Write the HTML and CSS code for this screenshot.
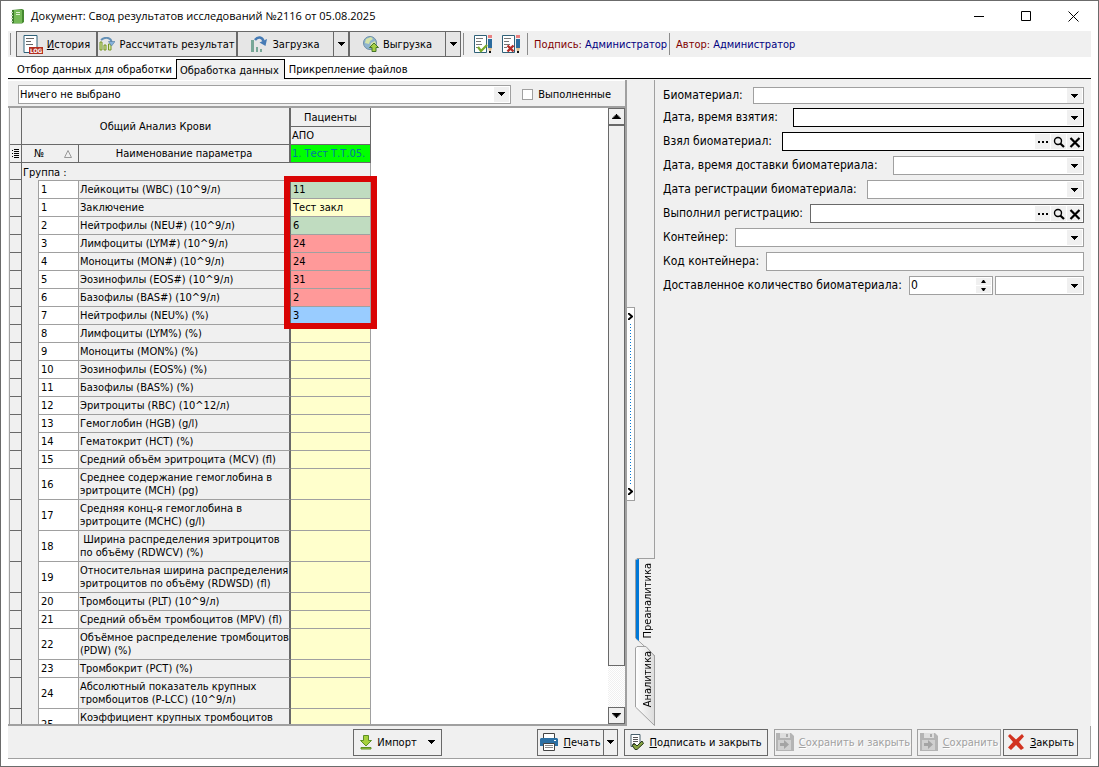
FILE: index.html
```html
<!DOCTYPE html>
<html lang="ru">
<head>
  <meta charset="UTF-8" />
  <title>Документ: Свод результатов исследований</title>
  <link rel="stylesheet" href="styles.css">
</head>
<body>
  <!-- Shared shapes -->
  <svg class="defs" aria-hidden="true">
    <symbol id="arrow" viewBox="0 0 7 4"><path d="M0 0h7v1H6v1H5v1H4v1H3V3H2V2H1V1H0z" /></symbol>
    <symbol id="arrow-up" viewBox="0 0 7 4"><path d="M3 0h1v1h1v1h1v1h1v1H0V3h1V2h1V1h1z" /></symbol>
    <symbol id="dots" viewBox="0 0 12 12"><path d="M1 5h2v2H1zM5 5h2v2H5zM9 5h2v2H9z" /></symbol>
    <symbol id="lens" viewBox="0 0 12 12">
      <circle cx="5" cy="5" r="3.5" fill="none" stroke="#000" stroke-width="1.4" />
      <path d="M7.3 7.5L11 11" stroke="#000" stroke-width="2.2" />
    </symbol>
    <symbol id="cross" viewBox="0 0 12 12"><path d="M1.5 2l9 9M10.5 2l-9 9" stroke="#000" stroke-width="2.2" /></symbol>
    <symbol id="doc-pencil" viewBox="0 0 20 20">
      <path d="M1.5 1.5h12v17h-12z" fill="#fff" stroke="#2f6178" />
      <path d="M3 4.5h7M3 7.5h5M3 10.5h6M3 13.5h3" stroke="#777" />
      <path d="M15 1h4v3h-4z" fill="#e98080" />
      <path d="M15 5h4v9h-4z" fill="#2c6c9e" />
      <path d="M15 14h4l-1 3h-2z" fill="#dfc090" />
      <path d="M16 17h2v2h-2z" fill="#111" />
    </symbol>
    <symbol id="floppy" viewBox="0 0 18 18">
      <path d="M0 0h15l3 3v15H0z" fill="#b4b4b4" />
      <path d="M4 0h10v5H4z" fill="#dedede" />
      <path d="M10 1h2v3h-2z" fill="#aaa" />
      <path d="M2 7h13v10H2z" fill="#d0d0d0" />
      <path d="M4 10h4V7l5 4.500-5 4.500v-3H4z" fill="#a4a4a4" />
    </symbol>
  </svg>

  <div class="window">
    <header class="titlebar">
      <svg class="title-icon" viewBox="0 0 14 16">
        <path d="M1 2l10-1 2 1v12l-2 1.500H1z" fill="#45892f" />
        <path d="M1 2h10v13H1z" fill="#74b956" />
        <path d="M1 2h2v13H1z" fill="#3c7c2b" />
        <path d="M5 4.500h4M5 6.500h4" stroke="#dff2d3" />
        <path d="M0 4.500h2M0 7.500h2M0 10.500h2M0 13.500h2" stroke="#c4d8bb" />
      </svg>
      <h1>Документ: Свод результатов исследований №2116 от 05.08.2025</h1>
      <div class="window-controls">
        <button type="button" aria-label="Свернуть"><svg viewBox="0 0 11 11"><path d="M0 5.500h10" stroke="#000" /></svg></button>
        <button type="button" aria-label="Развернуть"><svg viewBox="0 0 11 11"><path d="M.5.500h9v9h-9z" fill="none" stroke="#000" /></svg></button>
        <button type="button" aria-label="Закрыть окно"><svg viewBox="0 0 11 11"><path d="M.5.500l10 10M10.500.500l-10 10" stroke="#000" /></svg></button>
      </div>
    </header>

    <div class="toolbar">
      <span class="sep grip"></span>
      <button type="button" class="tool history">
        <svg width="20" height="19" viewBox="0 0 20 19">
          <path d="M1 .500h13v17H1z" fill="#fff" stroke="#2f6178" />
          <path d="M3 3.500h8M3 6.500h5M3 9.500h7" stroke="#666" />
          <path d="M6 12h14v7H6z" fill="#b33022" />
          <text x="7" y="18" font-size="6" font-weight="bold" fill="#fff">LOG</text>
        </svg>
        <span><u>И</u>стория</span>
      </button>
      <button type="button" class="tool calc">
        <svg width="16" height="14" viewBox="0 0 16 14">
          <path d="M1 5h2v8H1zM5 8h2v5H5zM9.500 7H12v6H9.500z" fill="#d9ecab" stroke="#769422" />
          <path d="M2 3C7-1 12 1 12.500 5" fill="none" stroke="#6490b6" stroke-width="2" />
          <path d="M9.500 4.500H16L12.500 9z" fill="#86b3dc" stroke="#50789c" stroke-width=".6" />
        </svg>
        <span>Рассчитать результат</span>
      </button>
      <div class="split">
        <button type="button" class="tool">
          <svg width="17" height="16" viewBox="0 0 17 16">
            <path d="M0 4h3v12H0zM5 11h2v5H5zM9 13h2v3H9z" fill="#78a797" />
            <path d="M4 4C7 0 11 1 12.500 5" fill="none" stroke="#467bb5" stroke-width="2.500" />
            <path d="M8.500 6.500L16 3l-1.500 7z" fill="#467bb5" />
          </svg>
          <span>Загрузка</span>
        </button>
        <button type="button" class="drop" aria-label="Меню загрузки"><svg class="arrow"><use href="#arrow" /></svg></button>
      </div>
      <div class="split">
        <button type="button" class="tool">
          <svg width="16" height="16" viewBox="0 0 16 16">
            <circle cx="7" cy="7" r="6.500" fill="#8fb4ce" stroke="#6c8ea6" />
            <path d="M3 3l5-2 2 2-3 2-1 3-4-1zM8 7l4-2 1 3-3 4-3-1z" fill="#d5e4a8" />
            <path d="M11 7l4.500 4.500H13V15.500H9V11.500H6.500z" fill="#a7cf45" stroke="#45752a" />
          </svg>
          <span>Выгрузка</span>
        </button>
        <button type="button" class="drop" aria-label="Меню выгрузки"><svg class="arrow"><use href="#arrow" /></svg></button>
      </div>
      <span class="sep"></span>
      <button type="button" class="flat" aria-label="Подписать">
        <svg width="20" height="20" viewBox="0 0 20 20"><use href="#doc-pencil" /><path d="M5 13l3 4 6-6" fill="none" stroke="#79a928" stroke-width="2.200" /></svg>
      </button>
      <button type="button" class="flat" aria-label="Снять подпись">
        <svg width="20" height="20" viewBox="0 0 20 20"><use href="#doc-pencil" /><path d="M6.500 11.500l6 6M12.500 11.500l-6 6" stroke="#b32c27" stroke-width="2.400" /></svg>
      </button>
      <span class="sep"></span>
      <p class="person">Подпись: <b>Администратор</b></p>
      <span class="sep"></span>
      <p class="person">Автор: <b>Администратор</b></p>
    </div>

    <nav class="tabs">
      <button type="button">Отбор данных для обработки</button>
      <button type="button" class="active">Обработка данных</button>
      <button type="button">Прикрепление файлов</button>
    </nav>

    <main class="content">
      <section class="left">
        <div class="filter">
          <div class="combo">
            <select aria-label="Фильтр"><option>Ничего не выбрано</option></select>
            <span class="combo-btn"><svg class="arrow"><use href="#arrow" /></svg></span>
          </div>
          <label class="check"><input type="checkbox" /> Выполненные</label>
        </div>
        <div class="grid">
          <div class="grid-view">
            <table>
              <colgroup><col class="c-mark"><col class="c-indent"><col class="c-num"><col class="c-name"><col class="c-value"></colgroup>
              <thead>
                <tr>
                  <th class="mark" rowspan="2"></th>
                  <th class="thick" colspan="3" rowspan="2">Общий Анализ Крови</th>
                  <th class="patients">Пациенты</th>
                </tr>
                <tr><th class="apo">АПО</th></tr>
                <tr>
                  <th class="mark"><svg width="7" height="9" viewBox="0 0 7 9"><path d="M0 1.500h1M2 .500h5M2 2.500h5M0 4.500h1M2 4.500h5M2 6.500h5M0 7.500h1M2 8.500h5" stroke="#000" /></svg></th>
                  <th class="num" colspan="2"><div><span>№</span><svg width="8" height="8" viewBox="0 0 8 8"><path d="M4 .500L7.500 7.500H.5z" fill="none" stroke="#999" /></svg></div></th>
                  <th class="thick">Наименование параметра</th>
                  <th class="patient">1. Тест Т.Т.05.</th>
                </tr>
              </thead>
              <tbody id="rows">
                <tr class="group"><td class="mark"></td><td colspan="4">Группа :</td></tr>
              </tbody>
            </table>
            <div class="highlight"></div>
          </div>
          <div class="scrollbar">
            <button type="button" aria-label="Вверх"><svg class="arrow big"><use href="#arrow-up" /></svg></button>
            <div class="thumb"></div>
            <div class="track"></div>
            <button type="button" aria-label="Вниз"><svg class="arrow big"><use href="#arrow" /></svg></button>
          </div>
        </div>
      </section>

      <div class="side">
        <div class="splitter">
          <svg viewBox="0 0 5 7"><path d="M0 0l4 3.500L0 7" /></svg>
          <i></i>
          <svg viewBox="0 0 5 7"><path d="M0 0l4 3.500L0 7" /></svg>
        </div>
        <div class="side-tabs">
          <button type="button" class="side-tab first">
            <svg viewBox="0 0 20 98"><path d="M20 .500H2L.5 2v78L20 98" fill="#f0f0f0" stroke="#a0a0a0" /><path d="M1 2l2-1h1v82l-3-2.500z" fill="#0078d7" /></svg>
            <span>Преаналитика</span>
          </button>
          <button type="button" class="side-tab second">
            <svg viewBox="0 0 20 80">
              <defs><linearGradient id="fade"><stop offset="0" stop-color="#fff" /><stop offset="1" stop-color="#dcdcdc" /></linearGradient></defs>
              <path d="M11 .500H2L.5 2v59l19 18.500V10z" fill="url(#fade)" stroke="#a0a0a0" />
            </svg>
            <span>Аналитика</span>
          </button>
        </div>
      </div>

      <form class="form">
        <div class="field low wide-gap">
          <label for="bio">Биоматериал:</label>
          <div class="combo"><select id="bio"></select><span class="combo-btn"><svg class="arrow"><use href="#arrow" /></svg></span></div>
        </div>
        <div class="field date-gap">
          <label for="taken">Дата, время взятия:</label>
          <div class="combo required"><select id="taken"></select><span class="combo-btn"><svg class="arrow"><use href="#arrow" /></svg></span></div>
        </div>
        <div class="field wide-gap">
          <label for="taker">Взял биоматериал:</label>
          <div class="combo required">
            <input type="text" id="taker" />
            <button type="button" aria-label="Выбрать"><svg><use href="#dots" /></svg></button>
            <button type="button" aria-label="Найти"><svg><use href="#lens" /></svg></button>
            <button type="button" aria-label="Очистить"><svg><use href="#cross" /></svg></button>
          </div>
        </div>
        <div class="field date-gap">
          <label for="delivered">Дата, время доставки биоматериала:</label>
          <div class="combo"><select id="delivered"></select><span class="combo-btn"><svg class="arrow"><use href="#arrow" /></svg></span></div>
        </div>
        <div class="field wide-gap">
          <label for="registered">Дата регистрации биоматериала:</label>
          <div class="combo"><select id="registered"></select><span class="combo-btn"><svg class="arrow"><use href="#arrow" /></svg></span></div>
        </div>
        <div class="field">
          <label for="registrar">Выполнил регистрацию:</label>
          <div class="combo dark">
            <input type="text" id="registrar" />
            <button type="button" aria-label="Выбрать"><svg><use href="#dots" /></svg></button>
            <button type="button" aria-label="Найти"><svg><use href="#lens" /></svg></button>
            <button type="button" aria-label="Очистить"><svg><use href="#cross" /></svg></button>
          </div>
        </div>
        <div class="field">
          <label for="container">Контейнер:</label>
          <div class="combo"><select id="container"></select><span class="combo-btn"><svg class="arrow"><use href="#arrow" /></svg></span></div>
        </div>
        <div class="field">
          <label for="code">Код контейнера:</label>
          <div class="combo"><input type="text" id="code" /></div>
        </div>
        <div class="field">
          <label for="amount">Доставленное количество биоматериала:</label>
          <div class="amount">
            <div class="combo">
              <input type="text" id="amount" value="0" />
              <div class="spin">
                <button type="button" aria-label="Больше"><svg viewBox="0 0 5 3"><path d="M0 3h5L3 0H2z" /></svg></button>
                <button type="button" aria-label="Меньше"><svg viewBox="0 0 5 3"><path d="M0 0h5L3 3H2z" /></svg></button>
              </div>
            </div>
            <div class="combo"><select aria-label="Единица измерения"></select><span class="combo-btn"><svg class="arrow"><use href="#arrow" /></svg></span></div>
          </div>
        </div>
      </form>
    </main>

    <footer class="footer">
      <button type="button" class="btn import">
        <svg width="12" height="16" viewBox="0 0 12 16">
          <path d="M3.500 1.500h5v5h3L6 12 .5 6.500h3z" fill="#a6d13c" stroke="#5d8f25" />
          <path d="M1 13.500h10v1.500H1z" fill="#a6d13c" stroke="#5d8f25" />
        </svg>
        <span>Импорт</span>
        <svg class="arrow"><use href="#arrow" /></svg>
      </button>
      <div class="print">
        <button type="button" class="btn">
          <svg width="18" height="18" viewBox="0 0 18 18">
            <path d="M3.500.500h11v6h-11z" fill="#fff" stroke="#444" />
            <path d="M1 5h16l1 1v7H0V6z" fill="#2c70a4" />
            <path d="M14 7h2v1h-2z" fill="#fff" />
            <path d="M3.500 10.500h11v7h-11z" fill="#fff" stroke="#444" />
            <path d="M5 12.500h8M5 14.500h8" stroke="#888" />
          </svg>
          <span><u>П</u>ечать</span>
        </button>
        <button type="button" class="drop" aria-label="Меню печати"><svg class="arrow"><use href="#arrow" /></svg></button>
      </div>
      <button type="button" class="btn sign">
        <svg width="14" height="16" viewBox="0 0 14 16">
          <path d="M1 .500h9v12H1z" fill="#fff" stroke="#48606c" />
          <path d="M3 3.500h5M3 5.500h5M3 7.500h5M3 9.500h2" stroke="#555" />
          <path d="M2 11l3-1 2 2 5-5 1.500 2.500L7 15.500H5z" fill="#88a545" stroke="#27391c" />
        </svg>
        <span><u>П</u>одписать и закрыть</span>
      </button>
      <button type="button" class="btn save-close" disabled><svg width="18" height="18"><use href="#floppy" /></svg><span><u>С</u>охранить и закрыть</span></button>
      <button type="button" class="btn save" disabled><svg width="18" height="18"><use href="#floppy" /></svg><span><u>С</u>охранить</span></button>
      <button type="button" class="btn close">
        <svg width="18" height="18" viewBox="0 0 18 18"><path d="M3 1l6 5.500L15 1l2 2.500L12 9l5 6-3 2-5-5-5 5-3-2.500L6 9 1 3z" fill="#d23320" /></svg>
        <span><u>З</u>акрыть</span>
      </button>
    </footer>
  </div>

  <script>
// Parameters of the blood test: number, name, value, colour class
var params = [
  ["1", "Лейкоциты (WBC) (10^9/л)", "11", "normal"],
  ["1", "Заключение", "Тест закл", ""],
  ["2", "Нейтрофилы (NEU#) (10^9/л)", "6", "normal"],
  ["3", "Лимфоциты (LYM#) (10^9/л)", "24", "high"],
  ["4", "Моноциты (MON#) (10^9/л)", "24", "high"],
  ["5", "Эозинофилы (EOS#) (10^9/л)", "31", "high"],
  ["6", "Базофилы (BAS#) (10^9/л)", "2", "high"],
  ["7", "Нейтрофилы (NEU%) (%)", "3", "low"],
  ["8", "Лимфоциты (LYM%) (%)"],
  ["9", "Моноциты (MON%) (%)"],
  ["10", "Эозинофилы (EOS%) (%)"],
  ["11", "Базофилы (BAS%) (%)"],
  ["12", "Эритроциты (RBC) (10^12/л)"],
  ["13", "Гемоглобин (HGB) (g/l)"],
  ["14", "Гематокрит (HCT) (%)"],
  ["15", "Средний объём эритроцита (MCV) (fl)"],
  ["16", "Среднее содержание гемоглобина в\nэритроците (MCH) (pg)"],
  ["17", "Средняя конц-я гемоглобина в\nэритроците (MCHC) (g/l)"],
  ["18", " Ширина распределения эритроцитов\nпо объёму (RDWCV) (%)"],
  ["19", "Относительная ширина распределения\nэритроцитов по объёму (RDWSD) (fl)"],
  ["20", "Тромбоциты (PLT) (10^9/л)"],
  ["21", "Средний объём тромбоцитов (MPV) (fl)"],
  ["22", "Объёмное распределение тромбоцитов\n(PDW) (%)"],
  ["23", "Тромбокрит (PCT) (%)"],
  ["24", "Абсолютный показатель крупных\nтромбоцитов (P-LCC) (10^9/л)"],
  ["25", "Коэффициент крупных тромбоцитов\n(P-LCR) (%)"]
];

var body = document.getElementById("rows");

// Add a cell to a row
function addCell(row, className, text) {
  var cell = document.createElement("td");
  cell.className = className;
  cell.textContent = text;
  row.appendChild(cell);
}

for (var i = 0; i < params.length; i++) {
  var row = document.createElement("tr");
  addCell(row, "mark", "");
  addCell(row, "indent", "");
  addCell(row, "number", params[i][0]);
  addCell(row, "name", params[i][1]);
  addCell(row, "value " + (params[i][3] || ""), params[i][2] || "");
  body.appendChild(row);
}
  </script>
</body>
</html>
```

FILE: styles.css
```css
* {
  box-sizing: border-box;
}

body {
  margin: 0;
  font: 11px/13px "DejaVu Sans Condensed", "DejaVu Sans", sans-serif;
  color: #000;
}

button,
input,
select {
  margin: 0;
  padding: 0;
  border: 0;
  border-radius: 0;
  background: none;
  font: inherit;
  color: inherit;
}

select {
  appearance: none;
}

svg {
  display: block;
  flex: none;
}

.defs {
  display: none;
}

.arrow {
  width: 7px;
  height: 4px;
}

.arrow.big {
  width: 9px;
  height: 5px;
}

.window {
  display: flex;
  flex-direction: column;
  height: 100vh;
  padding: 0 7px 7px;
  border: 1px solid #6b6b6b;
  background: #fff;
}

/* Title bar */
.titlebar {
  display: flex;
  align-items: center;
  gap: 6px;
  height: 30px;
  padding-left: 3px;
}

.title-icon {
  width: 14px;
  height: 16px;
}

h1 {
  flex: 1;
  margin: 0;
  font: 11px/16px "Open Sans", "Noto Sans", sans-serif;
}

.window-controls {
  display: flex;
  margin-right: -6px;
}

.window-controls button {
  display: flex;
  justify-content: center;
  width: 47px;
}

.window-controls svg {
  width: 11px;
  height: 11px;
}

/* Toolbar */
.toolbar {
  display: flex;
  align-items: center;
  height: 26px;
  background: #f0f0f0;
}

.sep {
  width: 1px;
  height: 22px;
  margin: 0 2px;
  background: #8c8c8c;
}

.grip {
  margin-right: 5px;
}

.tool,
.drop {
  display: flex;
  align-items: center;
  justify-content: center;
  gap: 4px;
  height: 26px;
  border: 1px solid #696969;
  background: #e6e6e6;
  white-space: nowrap;
}

.history {
  width: 81px;
}

.calc {
  width: 140px;
}

.split {
  display: flex;
  width: 112px;
}

.split .tool {
  flex: 1;
}

.drop {
  width: 15px;
  border-left: 0;
}

.flat {
  margin-left: 7px;
}

.flat + .flat {
  margin-left: 8px;
}

.flat + .sep {
  margin: 0 6px;
}

.person {
  margin: 0;
  color: #800000;
}

.sep + .person {
  margin-left: 4px;
}

.flat + .sep + .person {
  margin-left: 0;
}

.person b {
  font-weight: normal;
  color: #000080;
}

/* Page tabs */
.tabs {
  display: flex;
  align-items: flex-end;
  height: 22px;
  border-bottom: 1px solid #000;
}

.tabs button {
  height: 19px;
  padding: 2px 4px 0 9px;
  white-space: nowrap;
}

.tabs .active {
  height: 20px;
  margin-bottom: -1px;
  padding: 2px 5px 0 3px;
  border: 1px solid #000;
  border-bottom: 0;
  background: #f0f0f0;
}

.tabs .active + button {
  padding-left: 4px;
}

/* Main area */
.content {
  display: flex;
  flex: 1;
  min-height: 0;
  padding-top: 1px;
  background: #f0f0f0;
}

.left {
  display: flex;
  flex-direction: column;
  width: 619px;
  border-right: 2px solid #a0a0a0;
  border-bottom: 2px solid #a0a0a0;
}

.filter {
  display: flex;
  align-items: center;
  gap: 11px;
  height: 28px;
  padding: 1px 14px 0 10px;
  border-top: 1px solid #fff;
  border-bottom: 2px solid #a0a0a0;
}

.combo {
  display: flex;
  flex: 1;
  align-items: center;
  min-width: 0;
  height: 19px;
  padding-right: 1px;
  border: 1px solid #a0a0a0;
  background: #fff;
}

.combo select,
.combo input {
  flex: 1;
  width: 100%;
  min-width: 0;
  padding-left: 1px;
}

.combo-btn {
  display: flex;
  flex: none;
  align-items: center;
  justify-content: center;
  width: 15px;
  height: 15px;
  background: #f0f0f0;
}

.combo.required {
  border-color: #000;
}

.combo.dark {
  border-color: #696969;
}

.check {
  display: flex;
  align-items: center;
  gap: 5px;
}

.check input {
  appearance: none;
  width: 11px;
  height: 11px;
  border: 1px solid #a0a0a0;
  background: #fff;
}

.grid {
  display: flex;
  flex: 1;
  min-height: 0;
  margin-left: 1px;
  border-left: 1px solid #a0a0a0;
  background: #fff;
}

.grid-view {
  position: relative;
  flex: 1;
  overflow: hidden;
}

table {
  width: 361px;
  table-layout: fixed;
  border-collapse: separate;
  border-spacing: 0;
}

.c-mark {
  width: 12px;
}

.c-indent {
  width: 17px;
}

.c-num {
  width: 40px;
}

.c-name {
  width: 212px;
}

.c-value {
  width: 80px;
}

th,
td {
  height: 18px;
  padding: 2px 1px;
  background: #f0f0f0;
  text-align: left;
  white-space: pre;
}

th {
  border: solid #696969;
  border-width: 0 1px 1px 0;
  font-weight: normal;
  text-align: center;
}

th.patients {
  height: 19px;
}

th.thick {
  border-right-width: 2px;
}

th.apo {
  text-align: left;
}

.num div {
  display: flex;
  align-items: center;
  justify-content: space-between;
  padding: 0 5px 0 11px;
}

th.patient {
  overflow: hidden;
  background: #00ff00;
  color: #0078a0;
  text-align: left;
}

td {
  border: solid #a0a0a0;
  border-width: 0 1px 1px 0;
}

.mark {
  border-color: #696969;
}

th.mark svg {
  margin: 0 auto;
}

.group td {
  padding-bottom: 1px;
}

.group td:last-child {
  height: 17px;
  border-bottom: 0;
}

.group td.mark {
  height: 17px;
}

.group + tr td {
  height: 19px;
}

.group + tr td:not(.mark, .indent) {
  border-top: 1px solid #a0a0a0;
}

td.indent {
  border-bottom: 0;
}

td.number {
  padding-left: 2px;
  background: #fff;
}

td.name {
  border-right: 2px solid #696969;
}

td.value {
  padding-left: 2px;
  background: #ffffcc;
}

td.value.normal {
  background: #c0dcc0;
}

td.value.high {
  background: #ff9999;
}

td.value.low {
  background: #99ccff;
}

/* Red frame over the filled results */
.highlight {
  position: absolute;
  top: 68px;
  left: 274px;
  width: 93px;
  height: 153px;
  border: 6px solid #d90404;
}

.scrollbar {
  display: flex;
  flex-direction: column;
  width: 17px;
  background: #f0f0f0;
}

.scrollbar button {
  display: flex;
  align-items: center;
  justify-content: center;
  height: 17px;
  border: 1px solid #696969;
}

.thumb {
  flex: 13;
  border: 1px solid #696969;
}

.track {
  flex: 1;
  background: repeating-conic-gradient(#fff 0 25%, #f0f0f0 0 50%) 0 0 / 2px 2px;
}

/* Splitter and vertical tabs */
.side {
  display: flex;
  flex-direction: column;
  justify-content: flex-end;
  width: 28px;
  background: linear-gradient(#a0a0a0, #a0a0a0) 100% 0 / 1px 478px no-repeat;
}

.splitter {
  display: flex;
  flex-direction: column;
  align-items: center;
  justify-content: space-between;
  width: 8px;
  height: 194px;
  padding: 5px 0;
  border: 1px solid #a0a0a0;
  border-left: 0;
  background: #fff;
}

.splitter svg {
  width: 5px;
  height: 7px;
  fill: none;
  stroke: #000;
  stroke-width: 2;
}

.splitter i {
  width: 1px;
  height: 161px;
  background: repeating-linear-gradient(#0078d7 0 1px, transparent 1px 3px);
}

.side-tabs {
  padding: 57px 0 0 8px;
}

.side-tab {
  display: grid;
  align-items: start;
  width: 20px;
}

.side-tab svg,
.side-tab span {
  grid-area: 1 / 1;
}

.side-tab svg {
  width: 20px;
}

.side-tab span {
  justify-self: end;
  margin-right: 1px;
  padding-bottom: 5px;
  writing-mode: vertical-rl;
  transform: rotate(180deg);
}

.first {
  height: 88px;
}

.first svg {
  height: 98px;
}

.second svg {
  height: 80px;
}

/* Right form */
.form {
  display: flex;
  flex: 1;
  flex-direction: column;
  gap: 5px;
  min-width: 0;
  padding: 7px 7px 0 8px;
  font-size: 12px;
  line-height: 15px;
}

.field {
  display: flex;
  align-items: center;
  gap: 7px;
}

.wide-gap {
  gap: 10px;
}

.date-gap {
  gap: 15px;
}

.field label {
  white-space: nowrap;
}

.low {
  margin-bottom: -1px;
}

.low .combo {
  height: 17px;
}

.combo > button {
  display: flex;
  align-items: center;
  justify-content: center;
  width: 15px;
  height: 15px;
  margin-left: 2px;
  background: #f0f0f0;
}

.combo > button svg {
  width: 12px;
  height: 12px;
}

.combo > button + button {
  margin-left: 1px;
}

.amount {
  display: flex;
  flex: 1;
  gap: 2px;
}

.amount .combo + .combo {
  flex: none;
  width: 89px;
}

.spin {
  display: flex;
  flex-direction: column;
  gap: 1px;
}

.spin button {
  display: flex;
  align-items: center;
  justify-content: center;
  width: 15px;
  height: 7px;
  background: #f0f0f0;
}

.spin svg {
  width: 5px;
  height: 3px;
}

/* Footer */
.footer {
  display: flex;
  align-items: center;
  gap: 6px;
  height: 33px;
  padding-right: 12px;
  border: solid #a0a0a0;
  border-width: 0 1px 1px 0;
  background: #f0f0f0;
}

.btn {
  display: flex;
  align-items: center;
  justify-content: center;
  gap: 5px;
  height: 27px;
  border: 1px solid #696969;
  background: #f0f0f0;
  white-space: nowrap;
}

.import {
  width: 89px;
  margin: 0 auto 0 345px;
}

.import .arrow {
  margin-left: 6px;
}

.print {
  display: flex;
}

.print .btn {
  width: 67px;
}

.print .drop {
  width: 14px;
  height: 27px;
  background: none;
}

.sign {
  width: 144px;
}

.save-close {
  width: 138px;
  margin-right: -1px;
}

.save {
  width: 84px;
  margin-right: -4px;
}

.close {
  width: 75px;
}

.btn:disabled {
  border-color: #a0a0a0;
  color: #a0a0a0;
  text-shadow: 1px 1px #fff;
}
```
